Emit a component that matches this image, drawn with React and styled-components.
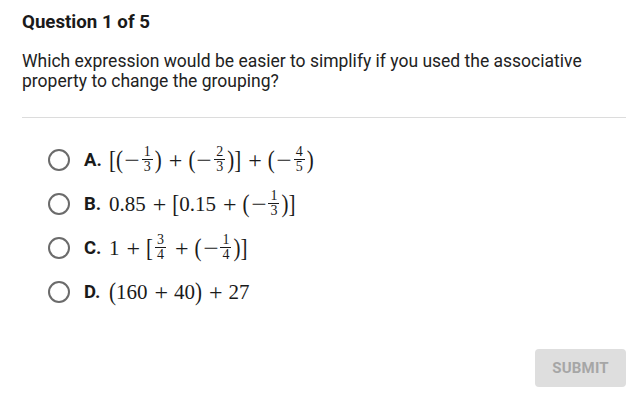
import React from 'react';
import styled, { createGlobalStyle } from 'styled-components';

const GlobalStyle = createGlobalStyle`
  html, body {
    margin: 0;
    padding: 0;
    background: #ffffff;
  }
  body {
    font-family: Roboto, "Liberation Sans", sans-serif;
    color: #222;
  }
`;

const Page = styled.div`
  width: 644px;
  height: 411px;
  box-sizing: border-box;
  padding: 11px 18px 0 22px;
  display: flex;
  flex-direction: column;
`;

const Title = styled.h2`
  margin: 0;
  font-size: 18.7px;
  font-weight: 700;
  line-height: 22px;
  color: #1a1a1a;
`;

const Prompt = styled.p`
  margin: 18px 0 0;
  font-size: 17.5px;
  line-height: 20px;
  color: #222;
`;

const Divider = styled.hr`
  margin: 26px 0 0;
  border: none;
  border-top: 1px solid #dcdcdc;
`;

const Options = styled.div`
  display: flex;
  flex-direction: column;
  gap: 14px;
  margin-top: 27px;
  padding-left: 26px;
`;

const Option = styled.label`
  display: flex;
  align-items: center;
  height: 30px;
  cursor: pointer;
`;

const Radio = styled.span`
  width: 18px;
  height: 18px;
  border: 2px solid #6b6b6b;
  border-radius: 50%;
  flex-shrink: 0;
`;

const Letter = styled.span`
  margin-left: 14px;
  width: 25px;
  font-size: 18.5px;
  font-weight: 700;
  color: #1a1a1a;
`;

const Math = styled.span`
  display: inline-flex;
  align-items: center;
  font-family: "Liberation Serif", "DejaVu Serif", serif;
  font-size: 21px;
  color: #1a1a1a;
  white-space: pre;
`;

const Op = styled.span`
  margin: 0 6px 0 7px;
  font-size: 24px;
  line-height: 1;
`;

const Minus = styled.span`
  margin: 0 2px 0 3px;
  transform: scaleX(1.3);
`;

const Paren = styled.span`
  display: inline-block;
  transform: scaleY(1.18);
`;

const Frac = styled.span`
  display: inline-flex;
  flex-direction: column;
  align-items: center;
  font-size: 14px;
  line-height: 12px;
  margin: 0 2px;
  transform: translateY(-1px);
`;

const Num = styled.span`
  padding: 0 2px 1px;
  border-bottom: 1px solid #1a1a1a;
`;

const Den = styled.span`
  padding-top: 1px;
`;

const Footer = styled.div`
  display: flex;
  justify-content: flex-end;
  margin-top: auto;
  margin-bottom: 24px;
`;

const SubmitButton = styled.button`
  width: 91px;
  height: 38px;
  border: none;
  border-radius: 4px;
  background: #dedede;
  color: #a6a6a6;
  font-family: Roboto, "Liberation Sans", sans-serif;
  font-size: 15px;
  font-weight: 700;
  letter-spacing: 0.2px;
  cursor: not-allowed;
`;

const F = ({ n, d }) => (
  <Frac>
    <Num>{n}</Num>
    <Den>{d}</Den>
  </Frac>
);

const P = () => <Op>+</Op>;
const M = () => <Minus>−</Minus>;
const L = ({ c }) => <Paren>{c}</Paren>;

const answers = [
  {
    letter: 'A.',
    expr: (
      <>
        <L c="[" /><L c="(" /><M /><F n="1" d="3" /><L c=")" /><P /><L c="(" /><M /><F n="2" d="3" /><L c=")" /><L c="]" /><P /><L c="(" /><M /><F n="4" d="5" /><L c=")" />
      </>
    ),
  },
  {
    letter: 'B.',
    expr: (
      <>
        0.85<P /><L c="[" />0.15<P /><L c="(" /><M /><F n="1" d="3" /><L c=")" /><L c="]" />
      </>
    ),
  },
  {
    letter: 'C.',
    expr: (
      <>
        1<P /><L c="[" /><F n="3" d="4" /><P /><L c="(" /><M /><F n="1" d="4" /><L c=")" /><L c="]" />
      </>
    ),
  },
  {
    letter: 'D.',
    expr: (
      <>
        <L c="(" />160<P />40<L c=")" /><P />27
      </>
    ),
  },
];

export default function App() {
  return (
    <>
      <GlobalStyle />
      <Page>
        <Title>Question 1 of 5</Title>
        <Prompt>
          Which expression would be easier to simplify if you used the associative
          <br />
          property to change the grouping?
        </Prompt>
        <Divider />
        <Options>
          {answers.map(a => (
            <Option key={a.letter}>
              <Radio />
              <Letter>{a.letter}</Letter>
              <Math>{a.expr}</Math>
            </Option>
          ))}
        </Options>
        <Footer>
          <SubmitButton disabled>SUBMIT</SubmitButton>
        </Footer>
      </Page>
    </>
  );
}
